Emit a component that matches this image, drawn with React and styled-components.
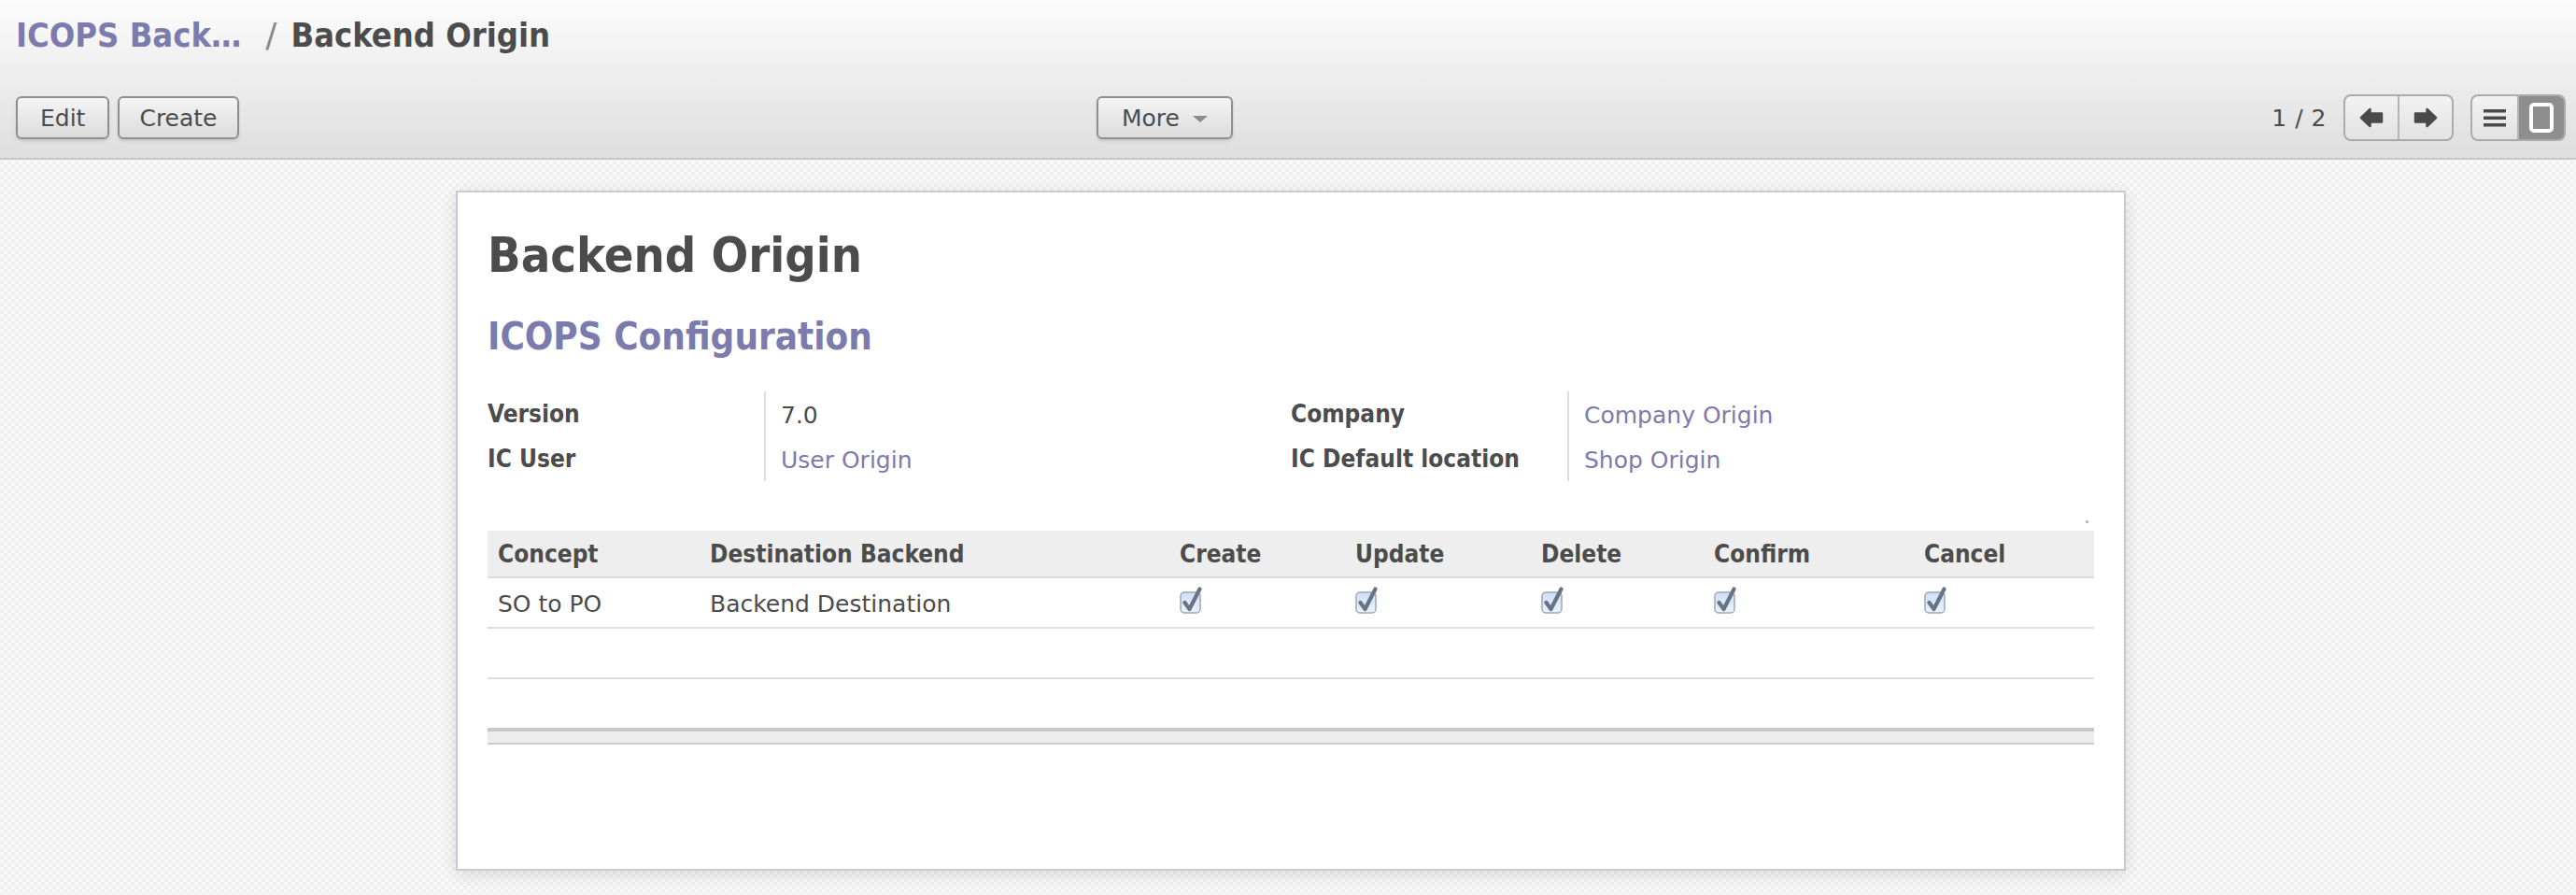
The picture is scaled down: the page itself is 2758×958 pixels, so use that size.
import React from 'react';
import styled, { createGlobalStyle } from 'styled-components';

const SANS = `"DejaVu Sans", "Lucida Grande", sans-serif`;
const BOLD = `"DejaVu Sans Condensed", "DejaVu Sans", sans-serif`;
const TEXT = '#4c4c4c';
const LINK = '#7c7bad';

const GlobalStyle = createGlobalStyle`
  html, body {
    margin: 0;
    padding: 0;
  }

  body {
    font-family: ${SANS};
    color: ${TEXT};
    background-color: #f9f9f9;
    background-image: conic-gradient(#f0f0f0 25%, transparent 0 50%, #f0f0f0 0 75%, transparent 0);
    background-size: 8px 8px;
  }

  #root {
    min-height: 958px;
  }
`;

const Header = styled.header`
  box-sizing: border-box;
  height: 171px;
  padding: 16px 11px 0 17px;
  background: linear-gradient(#fcfcfc, #dedede);
  border-bottom: 2px solid #cacaca;
`;

const Breadcrumb = styled.div`
  display: flex;
  align-items: baseline;
  height: 44px;
  line-height: 44px;
  font-family: ${BOLD};
  font-weight: bold;
  font-size: 36px;
  white-space: nowrap;
`;

const CrumbLink = styled.span`
  color: ${LINK};
`;

const CrumbSep = styled.span`
  font-family: ${SANS};
  font-weight: normal;
  color: #8a8a8a;
  margin: 0 15px 0 26px;
`;

const CrumbCurrent = styled.span`
  color: ${TEXT};
`;

const ButtonRow = styled.div`
  display: grid;
  grid-template-columns: 1157px 1fr auto;
  align-items: center;
  margin-top: 41px;
  height: 46px;
`;

const ButtonGroup = styled.div`
  display: flex;
  gap: 9px;
`;

const Button = styled.button`
  box-sizing: border-box;
  height: 46px;
  padding: 0 ${(p) => p.$pad || 22}px;
  display: inline-flex;
  align-items: center;
  gap: 14px;
  font-family: ${SANS};
  font-size: 25px;
  color: ${TEXT};
  background: linear-gradient(#f4f4f4, #dcdcdc);
  border: 2px solid #8f8f8f;
  border-radius: 6px;
  box-shadow: 0 2px 3px rgba(0, 0, 0, 0.12);
`;

const Caret = styled.span`
  width: 0;
  height: 0;
  border-left: 8px solid transparent;
  border-right: 8px solid transparent;
  border-top: 7px solid #8c8c8c;
  margin-top: 3px;
`;

const RightTools = styled.div`
  display: flex;
  align-items: center;
  gap: 18px;
`;

const PagerText = styled.span`
  font-size: 25px;
  color: ${TEXT};
  letter-spacing: 0.5px;
`;

const Segmented = styled.div`
  box-sizing: border-box;
  display: flex;
  height: 50px;
  border: 2px solid #ababab;
  border-radius: 8px;
  overflow: hidden;
  background: linear-gradient(#f2f2f2, #e2e2e2);
`;

const Segment = styled.div`
  width: ${(p) => p.$w}px;
  display: flex;
  align-items: center;
  justify-content: center;
  background: ${(p) => (p.$active ? '#8e8e8e' : 'transparent')};
  & + & {
    border-left: 2px solid #b4b4b4;
  }
`;

const Sheet = styled.main`
  box-sizing: border-box;
  width: 1788px;
  min-height: 728px;
  margin: 33px 0 0 calc(50% - 891px);
  padding: 37px 32px 0;
  background: #fff;
  border: 2px solid #c9c9d3;
  box-shadow: 0 4px 18px rgba(0, 0, 0, 0.12);
`;

const Title = styled.h1`
  margin: 0;
  height: 60px;
  line-height: 60px;
  font-family: ${BOLD};
  font-weight: bold;
  font-size: 52px;
  color: ${TEXT};
`;

const Subtitle = styled.h2`
  margin: 33px 0 0;
  height: 48px;
  line-height: 48px;
  font-family: ${BOLD};
  font-weight: bold;
  font-size: 40px;
  color: ${LINK};
`;

const FieldGroups = styled.div`
  display: grid;
  grid-template-columns: 1fr 1fr;
  margin-top: 35px;
`;

const Fields = styled.div`
  display: grid;
  grid-template-columns: 296px 1fr;
  grid-auto-rows: 48px;
`;

const Label = styled.div`
  display: flex;
  align-items: center;
  font-family: ${BOLD};
  font-weight: bold;
  font-size: 26px;
  color: ${TEXT};
`;

const Value = styled.div`
  display: flex;
  align-items: center;
  padding: 2px 0 0 16px;
  border-left: 2px solid #dddddd;
  font-size: 25px;
  color: ${(p) => (p.$link ? LINK : TEXT)};
`;

const DotRow = styled.div`
  height: 53px;
  display: flex;
  justify-content: flex-end;
  align-items: flex-end;
  padding: 0 6px 8px 0;
  box-sizing: border-box;
`;

const Dot = styled.span`
  width: 3px;
  height: 3px;
  border-radius: 50%;
  background: #a8a8a8;
`;

const Table = styled.table`
  width: 100%;
  border-collapse: collapse;
  table-layout: fixed;
`;

const HeadCell = styled.th`
  height: 49px;
  padding: 0 11px;
  text-align: left;
  font-family: ${BOLD};
  font-weight: bold;
  font-size: 26px;
  color: ${TEXT};
  background: #eeeeee;
  border-bottom: 2px solid #dcdcdc;
`;

const Cell = styled.td`
  height: 50px;
  padding: 2px 11px 0;
  font-size: 25px;
  color: ${TEXT};
  border-bottom: ${(p) => (p.$plain ? 'none' : '2px solid #dddddd')};
  vertical-align: middle;
`;

const FootCell = styled.td`
  height: 12px;
  padding: 0;
  background: #ececec;
  border-top: 4px solid #c8c8c8;
  border-bottom: 2px solid #cccccc;
`;

const ArrowIcon = ({ dir }) => (
  <svg width="26" height="22" viewBox="0 0 26 22" style={{ transform: dir === 'right' ? 'scaleX(-1)' : 'none' }}>
    <path
      d="M2 11 L11.5 2 L11.5 6.5 L24 6.5 L24 15.5 L11.5 15.5 L11.5 20 Z"
      fill="#4a4a4a"
      stroke="#4a4a4a"
      strokeWidth="2.5"
      strokeLinejoin="round"
    />
  </svg>
);

const ListIcon = () => (
  <svg width="24" height="20" viewBox="0 0 24 20">
    <rect x="0" y="1" width="24" height="3.5" fill="#4a4a4a" />
    <rect x="0" y="8.5" width="24" height="3.5" fill="#4a4a4a" />
    <rect x="0" y="16" width="24" height="3.5" fill="#4a4a4a" />
  </svg>
);

const FormIcon = () => (
  <svg width="26" height="32" viewBox="0 0 26 32">
    <rect x="2" y="2" width="22" height="28" rx="3" fill="none" stroke="#ffffff" strokeWidth="4" />
  </svg>
);

const CheckIcon = () => (
  <svg width="26" height="30" viewBox="0 0 26 30">
    <defs>
      <linearGradient id="cbfill" x1="0" y1="0" x2="0" y2="1">
        <stop offset="0" stopColor="#cfe0f4" />
        <stop offset="1" stopColor="#e9f2fd" />
      </linearGradient>
    </defs>
    <rect x="1" y="6" width="21" height="22" rx="4" fill="url(#cbfill)" stroke="#9ea8b4" strokeWidth="1.5" />
    <path d="M5.5 17 L10.5 24 L21.5 2.5" fill="none" stroke="#68738a" strokeWidth="4.2" strokeLinecap="round" strokeLinejoin="round" />
  </svg>
);

const columns = [
  { key: 'concept', title: 'Concept', width: 227 },
  { key: 'dest', title: 'Destination Backend', width: 503 },
  { key: 'create', title: 'Create', width: 188 },
  { key: 'update', title: 'Update', width: 199 },
  { key: 'delete', title: 'Delete', width: 185 },
  { key: 'confirm', title: 'Confirm', width: 225 },
  { key: 'cancel', title: 'Cancel', width: 193 },
];

const rows = [
  { concept: 'SO to PO', dest: 'Backend Destination', create: true, update: true, delete: true, confirm: true, cancel: true },
];

const renderCell = (v) => (v === true ? <CheckIcon /> : v);

const App = () => (
  <>
    <GlobalStyle />
    <Header>
      <Breadcrumb>
        <CrumbLink>ICOPS Back…</CrumbLink>
        <CrumbSep>/</CrumbSep>
        <CrumbCurrent>Backend Origin</CrumbCurrent>
      </Breadcrumb>
      <ButtonRow>
        <ButtonGroup>
          <Button $pad={24}>Edit</Button>
          <Button $pad={21}>Create</Button>
        </ButtonGroup>
        <div>
          <Button $pad={25}>
            More
            <Caret />
          </Button>
        </div>
        <RightTools>
          <PagerText>1 / 2</PagerText>
          <Segmented>
            <Segment $w={56}><ArrowIcon dir="left" /></Segment>
            <Segment $w={56}><ArrowIcon dir="right" /></Segment>
          </Segmented>
          <Segmented>
            <Segment $w={48}><ListIcon /></Segment>
            <Segment $w={48} $active><FormIcon /></Segment>
          </Segmented>
        </RightTools>
      </ButtonRow>
    </Header>

    <Sheet>
      <Title>Backend Origin</Title>
      <Subtitle>ICOPS Configuration</Subtitle>

      <FieldGroups>
        <Fields>
          <Label>Version</Label>
          <Value>7.0</Value>
          <Label>IC User</Label>
          <Value $link>User Origin</Value>
        </Fields>
        <Fields>
          <Label>Company</Label>
          <Value $link>Company Origin</Value>
          <Label>IC Default location</Label>
          <Value $link>Shop Origin</Value>
        </Fields>
      </FieldGroups>

      <DotRow><Dot /></DotRow>

      <Table>
        <colgroup>
          {columns.map((c) => <col key={c.key} style={{ width: c.width }} />)}
        </colgroup>
        <thead>
          <tr>
            {columns.map((c) => <HeadCell key={c.key}>{c.title}</HeadCell>)}
          </tr>
        </thead>
        <tbody>
          {rows.map((r, i) => (
            <tr key={i}>
              {columns.map((c) => <Cell key={c.key}>{renderCell(r[c.key])}</Cell>)}
            </tr>
          ))}
          <tr>
            {columns.map((c) => <Cell key={c.key} />)}
          </tr>
          <tr>
            {columns.map((c) => <Cell key={c.key} $plain />)}
          </tr>
        </tbody>
        <tfoot>
          <tr>
            <FootCell colSpan={columns.length} />
          </tr>
        </tfoot>
      </Table>
    </Sheet>
  </>
);

export default App;
